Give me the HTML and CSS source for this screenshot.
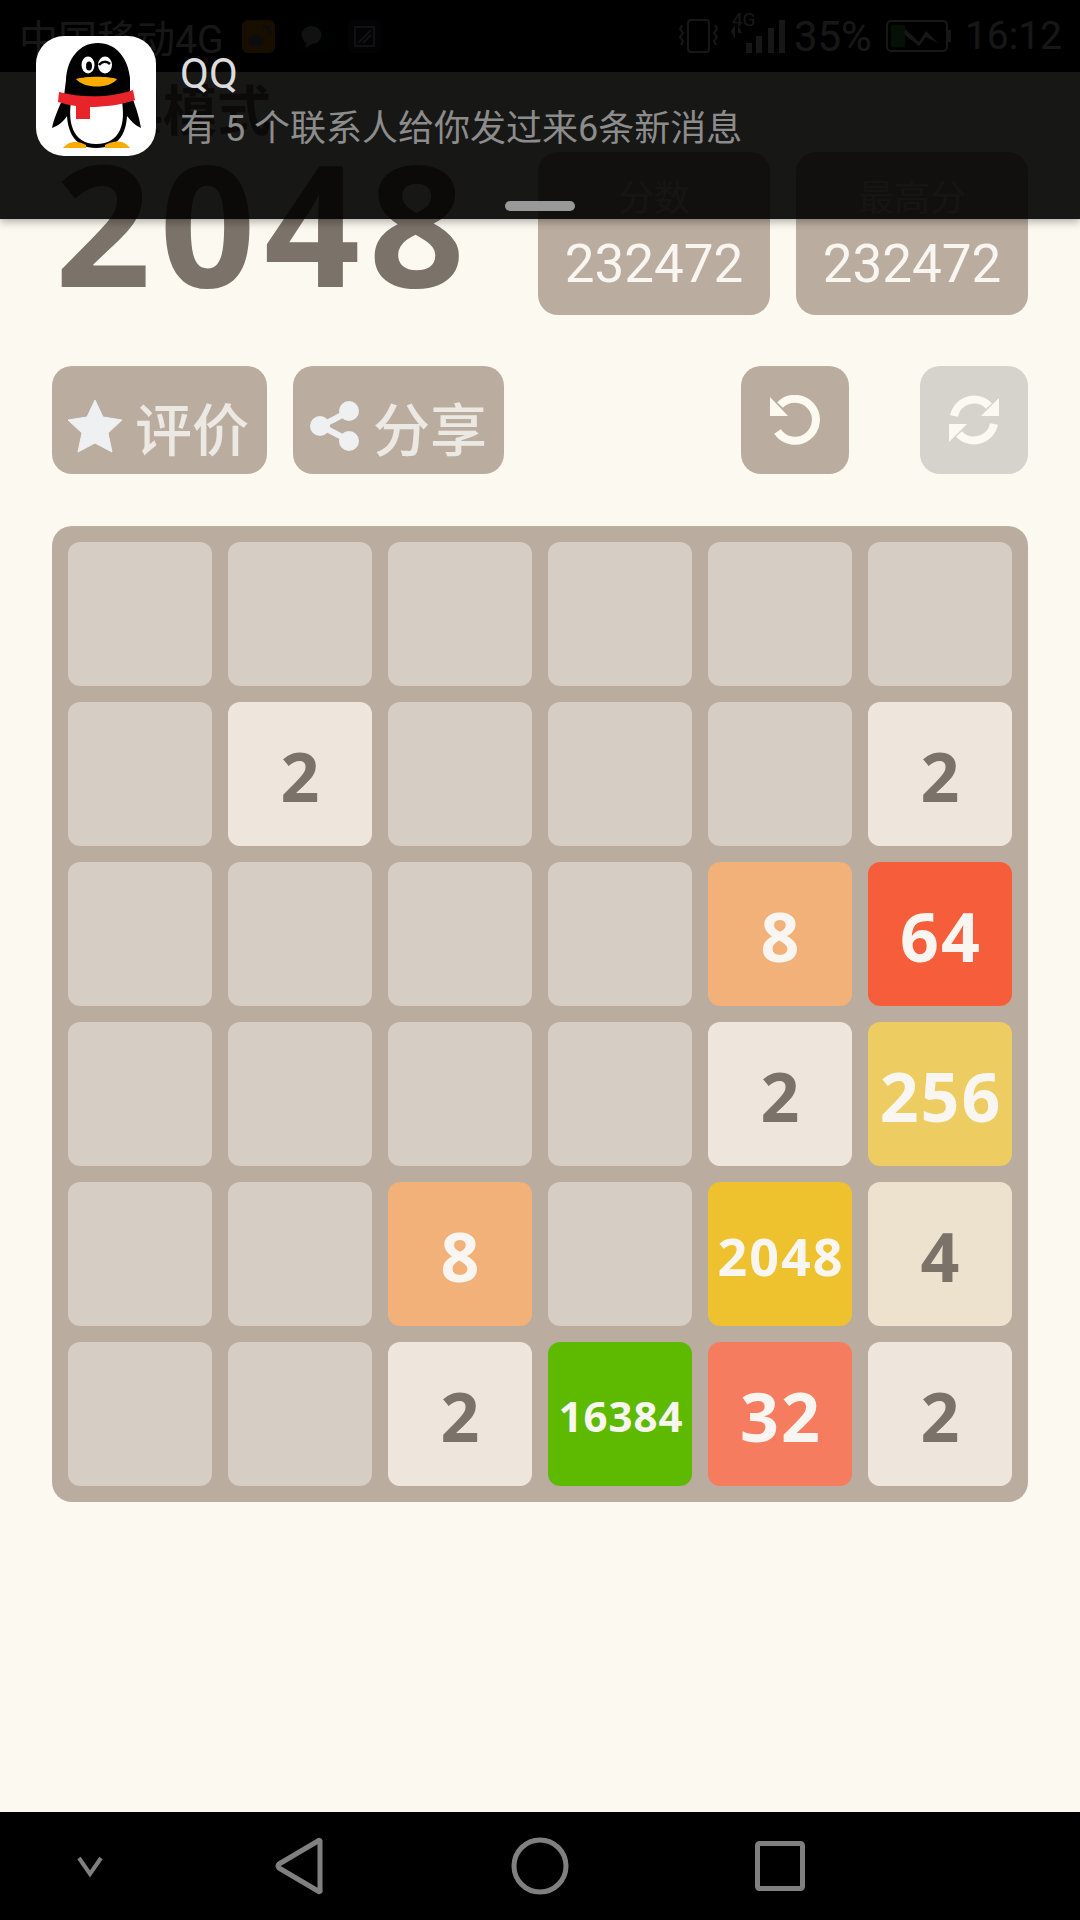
FILE: index.html
```html
<!DOCTYPE html>
<html lang="zh-CN">
<head>
  <meta charset="UTF-8">
  <meta name="viewport" content="width=device-width, initial-scale=1.0">
  <title>2048</title>
  <link rel="stylesheet" href="styles.css">
</head>
<body>
  <div id="statusBar">
    <div class="status-left">
      <span class="carrier">中国移动4G</span>
      <svg class="app-icon" width="33" height="33" viewBox="0 0 33 33"><rect width="33" height="33" rx="6" fill="#ff9800"/><ellipse cx="14" cy="21" rx="8" ry="6" fill="#8a8a8a"/><path d="M21 6a7 7 0 0 1 7 8" stroke="#8a8a8a" stroke-width="3" fill="none"/></svg>
      <svg class="app-icon" width="33" height="33" viewBox="0 0 33 33"><rect width="33" height="33" rx="6" fill="#0a1a10"/><ellipse cx="16.500" cy="15" rx="10" ry="9" fill="#b0b8b0"/><path d="M12 22l-2 6 7-4z" fill="#b0b8b0"/></svg>
      <svg class="app-icon" width="33" height="33" viewBox="0 0 33 33"><rect width="33" height="33" rx="6" fill="#2a2040"/><rect x="7" y="7" width="19" height="19" fill="none" stroke="#b8b8c8" stroke-width="2"/><path d="M10 23L23 10M15 23l8-8" stroke="#b8b8c8" stroke-width="2"/></svg>
    </div>
    <div class="status-right">
      <svg width="42" height="38" viewBox="0 0 42 38" fill="none" stroke="#fff" stroke-width="2"><rect x="10" y="3" width="21" height="32" rx="3"/><path d="M4 8l-2 4 3 4-3 4 3 4-2 4M37 8l2 4-3 4 3 4-3 4 2 4"/></svg>
      <div class="signal">
        <span class="net">4G</span>
        <svg width="58" height="38" viewBox="0 0 58 38" fill="#fff"><rect x="18" y="24" width="6" height="10"/><rect x="28" y="17" width="6" height="17"/><rect x="40" y="9" width="6" height="25"/><rect x="51" y="1" width="6" height="33"/><path d="M3 12l4-6v14zM10 6l4 8h-4z"/></svg>
      </div>
      <span class="percent">35%</span>
      <svg class="battery" width="65" height="32" viewBox="0 0 65 32"><rect x="1" y="1" width="60" height="30" rx="4" fill="none" stroke="#fff" stroke-width="2"/><rect x="5" y="5" width="14" height="22" fill="#4caf50"/><path d="M19 9l14 13 7-11 12 12-12-6-7 9-14-11z" fill="#fff"/><rect x="62" y="10" width="3" height="12" fill="#fff"/></svg>
      <span class="clock">16:12</span>
    </div>
  </div>

  <div id="main">
    <div class="header">
      <div class="title-col">
        <div class="mode">经典模式</div>
        <div class="title">2048</div>
      </div>
      <div class="scores">
        <div class="score-box">
          <div class="score-label">分数</div>
          <div class="score-value">232472</div>
        </div>
        <div class="score-box">
          <div class="score-label">最高分</div>
          <div class="score-value">232472</div>
        </div>
      </div>
    </div>

    <div class="actions">
      <div class="btn btn-rate">
        <svg width="56" height="54" viewBox="0 0 56 54"><path d="M28 1l8 17 19 3-14 13 4 19-17-9-17 9 4-19L1 21l19-3z" fill="#eef0f2" stroke="#eef0f2" stroke-width="1" stroke-linejoin="round"/></svg>
        <span>评价</span>
      </div>
      <div class="btn btn-share">
        <svg width="50" height="50" viewBox="0 0 50 50"><path d="M38 11L11 25l27 14" fill="none" stroke="#eef0f2" stroke-width="6"/><circle cx="39" cy="10" r="10" fill="#eef0f2"/><circle cx="10" cy="25" r="10" fill="#eef0f2"/><circle cx="39" cy="40" r="10" fill="#eef0f2"/></svg>
        <span>分享</span>
      </div>
      <div class="spacer"></div>
      <div class="btn-square">
        <svg width="50" height="50" viewBox="0 0 50 50"><path d="M10 10A21 21 0 1 1 7.500 36.500" fill="none" stroke="#fcf9f1" stroke-width="8"/><path d="M0 2v19h18z" fill="#fcf9f1"/></svg>
      </div>
      <div class="btn-square btn-restart">
        <svg width="50" height="50" viewBox="0 0 50 50"><g fill="none" stroke="#fcf9f1" stroke-width="8"><path d="M5 21A20.500 20.500 0 0 1 40 11"/><path d="M45 29A20.500 20.500 0 0 1 10 39"/></g><path d="M50 3v18H32zM0 47V29h18z" fill="#fcf9f1"/></svg>
      </div>
    </div>

    <div class="board">
      <div class="tile"></div><div class="tile"></div><div class="tile"></div><div class="tile"></div><div class="tile"></div><div class="tile"></div>
      <div class="tile"></div><div class="tile t2">2</div><div class="tile"></div><div class="tile"></div><div class="tile"></div><div class="tile t2">2</div>
      <div class="tile"></div><div class="tile"></div><div class="tile"></div><div class="tile"></div><div class="tile t8">8</div><div class="tile t64">64</div>
      <div class="tile"></div><div class="tile"></div><div class="tile"></div><div class="tile"></div><div class="tile t2">2</div><div class="tile t256">256</div>
      <div class="tile"></div><div class="tile"></div><div class="tile t8">8</div><div class="tile"></div><div class="tile t2048">2048</div><div class="tile t4">4</div>
      <div class="tile"></div><div class="tile"></div><div class="tile t2">2</div><div class="tile t16384">16384</div><div class="tile t32">32</div><div class="tile t2">2</div>
    </div>
  </div>

  <div id="navBar">
    <svg class="nav-more" width="60" height="24" viewBox="0 0 60 24"><path d="M19 4l11 16 11-16" fill="none" stroke="#808080" stroke-width="4"/></svg>
    <svg width="60" height="60" viewBox="0 0 60 60"><path d="M50 6v48a1 1 0 0 1-2 1L9 32a3 3 0 0 1 0-4L48 5a1 1 0 0 1 2 1z" fill="none" stroke="#808080" stroke-width="5" stroke-linejoin="round"/></svg>
    <svg width="60" height="60" viewBox="0 0 60 60"><circle cx="30" cy="30" r="26" fill="none" stroke="#808080" stroke-width="5"/></svg>
    <svg width="60" height="60" viewBox="0 0 60 60"><rect x="7.500" y="7.500" width="45" height="45" rx="2" fill="none" stroke="#808080" stroke-width="5"/></svg>
  </div>

  <!-- 通知 -->
  <div id="notice">
    <div class="qq-icon">
      <svg width="120" height="120" viewBox="0 0 120 120">
        <path d="M62 7C43 7 31 23 30 44L28 60C23 71 18 82 16 92C22 90 28 85 31 80C32 96 39 112 60 112C84 112 90 96 91 80C95 85 100 90 105 92C103 80 99 68 94 56L94 42C92 22 80 7 62 7Z" fill="#000"/>
        <path d="M35 66L86 66C89 85 86 108 60 108C36 108 32 85 35 66Z" fill="#fff"/>
        <ellipse cx="52" cy="29" rx="6.500" ry="8.500" fill="#fff"/>
        <ellipse cx="53" cy="30" rx="3" ry="4.500" fill="#000"/>
        <ellipse cx="69" cy="29" rx="7" ry="8.500" fill="#fff"/>
        <path d="M63 29C66 25 71 25 74 28" fill="none" stroke="#000" stroke-width="2.500"/>
        <path d="M40 43C50 40 72 40 81 43C74 53 48 53 40 43Z" fill="#f9ab00"/>
        <path d="M23 56C45 62 75 62 97 54L99 64C85 69 68 71 54 71L54 83L40 83L40 70C34 69 28 68 22 66Z" fill="#e8232a"/>
        <path d="M27 112C32 105 42 104 50 109L50 112ZM94 112C88 104 78 104 69 109L69 112Z" fill="#f9ab00"/>
      </svg>
    </div>
    <div class="notice-text">
      <div class="notice-app">QQ</div>
      <div class="notice-msg">有 5 个联系人给你发过来6条新消息</div>
    </div>
    <div class="handle"></div>
  </div>
</body>
</html>
```

FILE: styles.css
```css
body {
  font-family: Roboto, "Noto Sans CJK SC", sans-serif;
  margin: 0;
  padding: 0;
  width: 1080px;
  height: 1920px;
  display: flex;
  flex-direction: column;
  background-color: #fcf9f1;
  overflow: hidden;
}

#statusBar {
  height: 72px;
  flex: none;
  background-color: #000;
  color: #fff;
  display: flex;
  justify-content: space-between;
  align-items: center;
  padding: 0 18px 0 19px;
  box-sizing: border-box;
}

.status-left, .status-right {
  display: flex;
  align-items: center;
}

.carrier {
  font-size: 39px;
  margin-right: 19px;
  white-space: nowrap;
}

.app-icon {
  margin-right: 20px;
}

.status-right {
  gap: 8px;
  font-size: 39px;
}

.signal {
  position: relative;
  width: 58px;
  height: 38px;
  margin-top: 4px;
}

.net {
  position: absolute;
  left: 4px;
  top: -10px;
  font-size: 19px;
  line-height: 22px;
}

.percent {
  font-size: 42px;
}

.battery {
  margin-left: 6px;
}

.clock {
  margin-left: 6px;
}

#main {
  flex: 1;
  padding: 0 52px;
}

.header {
  display: flex;
  justify-content: space-between;
}

.title-col {
  padding-left: 3px;
}

.mode {
  font-size: 54px;
  line-height: 66px;
  margin-top: 8px;
  font-weight: bold;
  color: #776e65;
  white-space: nowrap;
}

.title {
  font-family: "Open Sans", sans-serif;
  font-size: 168px;
  line-height: 152px;
  font-weight: bold;
  color: #7b7269;
  letter-spacing: 8.500px;
}

.scores {
  display: flex;
  gap: 26px;
  margin-top: 80px;
}

.score-box {
  width: 232px;
  height: 163px;
  background-color: #baada0;
  border-radius: 20px;
  text-align: center;
}

.score-label {
  font-size: 36px;
  line-height: 44px;
  margin-top: 25px;
  color: #eee4da;
}

.score-value {
  font-size: 53px;
  line-height: 62px;
  margin-top: 12px;
  color: #f9f6f2;
}

.actions {
  display: flex;
  margin-top: 51px;
}

.btn {
  height: 108px;
  background-color: #baada0;
  border-radius: 20px;
  display: flex;
  align-items: center;
  box-sizing: border-box;
  padding-top: 12px;
  color: #ece8e3;
  font-size: 57px;
  font-weight: 500;
  white-space: nowrap;
}

.btn-rate {
  width: 215px;
  padding-left: 15px;
  gap: 12px;
  margin-right: 26px;
}

.btn-share {
  width: 211px;
  padding-left: 17px;
  gap: 13px;
}

.spacer {
  flex: 1;
}

.btn-square {
  width: 108px;
  height: 108px;
  background-color: #baada0;
  border-radius: 20px;
  display: flex;
  align-items: center;
  justify-content: center;
}

.btn-restart {
  margin-left: 71px;
  background-color: #d6d2cc;
}

.board {
  margin-top: 52px;
  padding: 16px;
  background-color: #baada0;
  border-radius: 20px;
  display: grid;
  grid-template-columns: repeat(6, 144px);
  grid-auto-rows: 144px;
  gap: 16px;
}

.tile {
  background-color: #d6cdc4;
  border-radius: 12px;
  display: flex;
  align-items: center;
  justify-content: center;
  padding: 2px 0 0 2px;
  box-sizing: border-box;
  font-family: "Open Sans", sans-serif;
  font-size: 68px;
  font-weight: bold;
  letter-spacing: 2px;
  color: #f9f6f2;
}

.t2 {
  background-color: #eee6dd;
  color: #7b7269;
}

.t4 {
  background-color: #ece2cd;
  color: #7b7269;
}

.t8 {
  background-color: #f2b179;
}

.t32 {
  background-color: #f67c5f;
}

.t64 {
  background-color: #f65e3b;
}

.t256 {
  background-color: #edcc61;
}

.t2048 {
  background-color: #edc22e;
  font-size: 52px;
}

.t16384 {
  background-color: #5dba00;
  font-size: 42px;
  letter-spacing: 1px;
}

#navBar {
  height: 108px;
  flex: none;
  background-color: #000;
  display: flex;
  align-items: center;
  gap: 180px;
  padding-left: 60px;
  box-sizing: border-box;
}

#navBar .nav-more {
  margin-right: -30px;
}

/* ステータスバーの上にも被さる */
#notice {
  position: absolute;
  left: 0;
  top: 0;
  width: 1080px;
  height: 219px;
  background-color: rgba(0, 0, 0, 0.91);
  box-shadow: 0 3px 8px rgba(0, 0, 0, 0.3);
}

.qq-icon {
  position: absolute;
  left: 36px;
  top: 36px;
  width: 120px;
  height: 120px;
  background-color: #fff;
  border-radius: 28px;
  overflow: hidden;
}

.notice-text {
  position: absolute;
  left: 180px;
  top: 49px;
}

.notice-app {
  font-size: 42px;
  line-height: 50px;
  color: #dcdcdc;
}

.notice-msg {
  font-size: 36px;
  line-height: 50px;
  margin-top: 5px;
  color: #8c8c8c;
  white-space: nowrap;
}

.handle {
  position: absolute;
  left: 505px;
  top: 201px;
  width: 70px;
  height: 10px;
  border-radius: 5px;
  background-color: #999;
}
```
